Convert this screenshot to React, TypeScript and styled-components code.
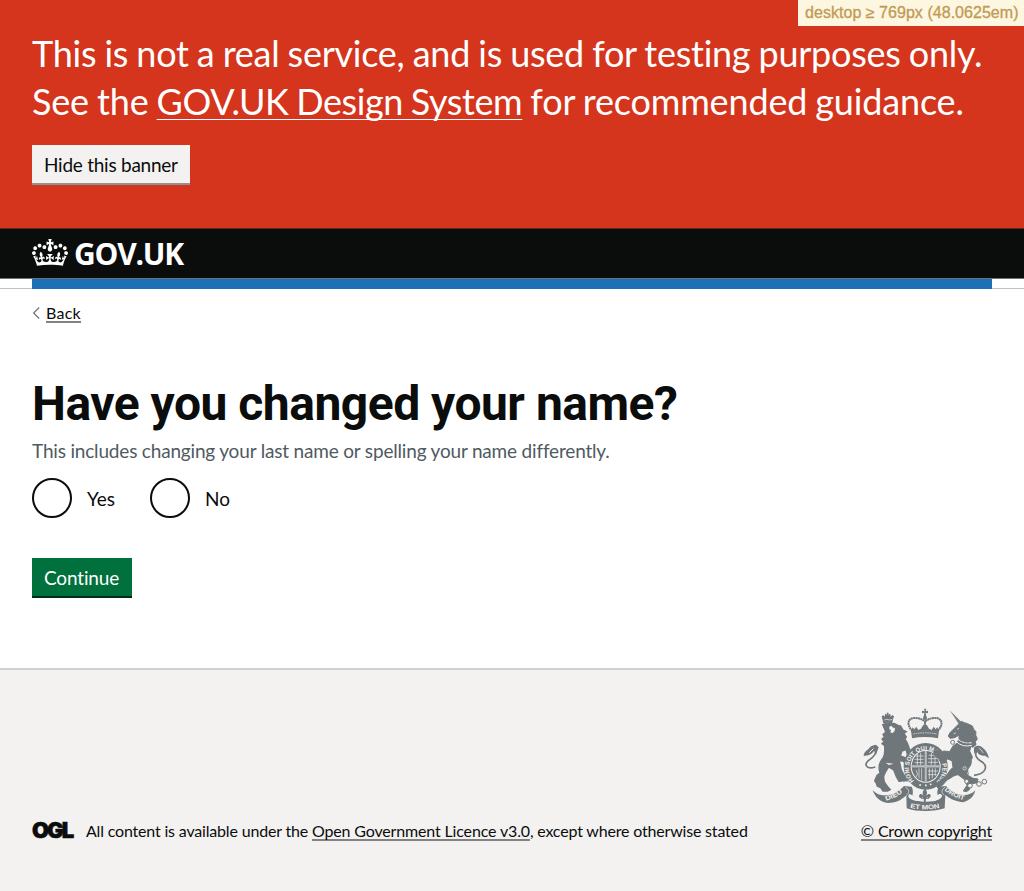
import React from "react";
import styled, { createGlobalStyle } from "styled-components";

const sans = '"Lato", "Liberation Sans", sans-serif';
const ink = "#0b0c0c";
const paper = "#f3f2f1";
const slate = "#6f777b";

const GlobalStyle = createGlobalStyle`
  * { box-sizing: border-box; }
  body { margin: 0; background: #fff; color: ${ink}; font-family: ${sans}; }
`;

const Page = styled.div`
  display: flex;
  flex-direction: column;
  min-height: 891px;
`;

const BreakpointTag = styled.div`
  position: absolute;
  top: 0;
  right: 0;
  height: 26px;
  width: 226px;
  padding-left: 7px;
  background: #fdf6e0;
  color: #c19a54;
  font: 16px/25px "Liberation Sans", Arial, sans-serif;
  letter-spacing: 0.04px;
  -webkit-text-stroke: 0.3px #c19a54;
  white-space: nowrap;
`;

const Banner = styled.section`
  height: 228px;
  padding: 29px 32px 0;
  background: #d4351c;
  color: #fff;
`;

const BannerText = styled.p`
  margin: 0 0 20px;
  font-size: 36px;
  line-height: 48px;
  white-space: nowrap;
`;

const BannerLine = styled.span<{ $track: number; $word: number }>`
  display: block;
  letter-spacing: ${(p) => p.$track}px;
  word-spacing: ${(p) => p.$word}px;
`;

const BannerLink = styled.a`
  color: inherit;
  letter-spacing: -0.4px;
  text-decoration: underline;
  text-decoration-thickness: 1px;
  text-underline-offset: 4px;
  text-decoration-skip-ink: none;
`;

const Button = styled.button<{ $tone: "light" | "green"; $width: number }>`
  display: block;
  width: ${(p) => p.$width}px;
  height: 38px;
  margin: 0;
  padding: 1px 0 0 12px;
  border: 0;
  text-align: left;
  white-space: nowrap;
  font: 19px/38px ${sans};
  letter-spacing: ${(p) => (p.$tone === "green" ? -0.15 : -0.25)}px;
  color: ${(p) => (p.$tone === "green" ? "#fff" : ink)};
  background: ${(p) => (p.$tone === "green" ? "#00703c" : paper)};
  box-shadow: 0 2px 0 ${(p) => (p.$tone === "green" ? "#002d18" : "#929191")};
`;

const Header = styled.header`
  height: 51px;
  padding: 10px 32px 0;
  border-top: 1px solid #5b2a22;
  border-bottom: 1px solid #6f7475;
  background: ${ink};
  color: #fff;
  display: flex;
  align-items: flex-start;
`;

const Wordmark = styled.span`
  margin-left: 6px;
  font: 700 30px/30px "Open Sans", sans-serif;
  letter-spacing: -1.2px;
`;

const BlueBar = styled.div`
  height: 10px;
  padding: 0 32px;
  border-bottom: 1px solid #bfc1c3;

  &::before {
    content: "";
    display: block;
    height: 10px;
    background: #1d70b8;
  }
`;

const Main = styled.main`
  flex: 1;
  padding: 14px 32px 0;
`;

const BackLink = styled.a`
  display: flex;
  align-items: center;
  width: max-content;
  height: 20px;
  gap: 6px;
  font-size: 16px;
  line-height: 20px;
  color: ${ink};
`;

const Underlined = styled.span<{ $track?: number }>`
  display: inline-block;
  height: 20px;
  line-height: 20px;
  border-bottom: 2px solid #818282;
  letter-spacing: ${(p) => p.$track ?? 0}px;
`;

const Title = styled.h1`
  margin: 56px 0 0;
  font: 700 48px/50px "Roboto", sans-serif;
  letter-spacing: -0.5px;
  white-space: nowrap;
`;

const Hint = styled.p`
  margin: 9px 0 15px;
  font-size: 19px;
  line-height: 25px;
  letter-spacing: -0.18px;
  color: #505a5f;
`;

const Choices = styled.div`
  display: flex;
  gap: 35px;
  height: 40px;
  margin-bottom: 40px;
`;

const Choice = styled.label`
  display: flex;
  align-items: flex-start;
  gap: 15px;
  font-size: 19px;
  line-height: 42px;
`;

const Dial = styled.span`
  width: 40px;
  height: 40px;
  border: 2px solid ${ink};
  border-radius: 50%;
`;

const Footer = styled.footer`
  height: 223px;
  padding: 36px 32px 0;
  border-top: 2px solid #cfd1d1;
  background: ${paper};
  display: flex;
  justify-content: space-between;
  align-items: flex-start;
`;

const Licence = styled.div`
  display: flex;
  align-items: center;
  height: 20px;
  margin-top: 115px;
  font-size: 16px;
  line-height: 20px;
  white-space: nowrap;
`;

const OglMark = styled.span`
  width: 54px;
  margin-top: -2px;
  font: 900 22px/20px "Inter", sans-serif;
  letter-spacing: -2px;
  -webkit-text-stroke: 0.6px ${ink};
`;

const LicenceText = styled.span`
  letter-spacing: -0.18px;
`;

const Copyright = styled.a`
  display: flex;
  flex-direction: column;
  align-items: flex-end;
  gap: 8px;
  font-size: 16px;
  color: ${ink};

  svg { margin-right: 2px; }
`;

const Crown = () => (
  <svg width="36" height="27" viewBox="0 0 132 97" preserveAspectRatio="none" fill="#fff" aria-hidden="true">
    <path fillRule="evenodd" d="M25 30.2c3.5 1.5 7.7-.2 9.1-3.7 1.5-3.6-.2-7.8-3.9-9.2-3.6-1.4-7.6.3-9.1 3.9-1.4 3.5.3 7.5 3.9 9zM9 39.5c3.6 1.5 7.8-.2 9.2-3.7 1.5-3.6-.2-7.8-3.9-9.1-3.6-1.5-7.6.2-9.1 3.8-1.4 3.5.3 7.5 3.8 9zM4.4 57.2c3.5 1.5 7.7-.2 9.1-3.8 1.5-3.6-.2-7.7-3.9-9.1-3.5-1.5-7.6.3-9.1 3.8-1.4 3.5.3 7.6 3.9 9.1zm38.3-21.4c3.5 1.5 7.7-.2 9.1-3.8 1.5-3.6-.2-7.7-3.9-9.1-3.6-1.5-7.6.3-9.1 3.8-1.3 3.6.4 7.7 3.9 9.1zm64.4-5.6c-3.6 1.5-7.8-.2-9.1-3.7-1.5-3.6.2-7.8 3.8-9.2 3.6-1.4 7.7.3 9.2 3.9 1.3 3.5-.4 7.5-3.9 9zm15.9 9.3c-3.6 1.5-7.7-.2-9.1-3.7-1.5-3.6.2-7.8 3.7-9.1 3.6-1.5 7.7.2 9.2 3.8 1.5 3.5-.3 7.5-3.8 9zm4.7 17.7c-3.6 1.5-7.8-.2-9.2-3.8-1.5-3.6.2-7.7 3.9-9.1 3.6-1.5 7.7.3 9.2 3.8 1.3 3.5-.4 7.6-3.9 9.1zM89.3 35.8c-3.6 1.5-7.8-.2-9.2-3.8-1.4-3.6.2-7.7 3.9-9.1 3.6-1.5 7.7.3 9.2 3.8 1.4 3.6-.3 7.7-3.9 9.1zM69.7 17.7l8.9 4.7V9.3l-8.9 2.8c-.2-.3-.5-.6-.9-.9L72.4 0H59.6l3.5 11.2c-.3.3-.6.5-.9.9l-8.8-2.8v13.1l8.8-4.7c.3.3.6.7.9.9l-5 15.4v.1c-.2.8-.4 1.6-.4 2.4 0 4.1 3.1 7.5 7 8.1h.2c.3 0 .7.1 1 .1.4 0 .7 0 1-.1h.2c4-.6 7.1-4.1 7.1-8.1 0-.8-.1-1.7-.4-2.4V34l-5.1-15.4c.4-.2.7-.6 1-.9zM66 92.8c16.9 0 32.8 1.1 47.1 3.2 4-16.9 8.9-26.7 14-33.5l-9.6-3.4c1 4.9 1.1 7.2 0 10.2-1.5-1.4-3-4.3-4.2-8.7L108.6 76c2.8-2 5-3.2 7.5-3.3-4.4 9.4-10 11.9-13.6 11.2-4.3-.8-6.3-4.6-5.6-7.9 1-4.7 5.7-5.9 8-.5 4.3-8.7-3-11.4-7.6-8.8 7.1-7.2 7.9-13.5 2.1-21.1-8 6.1-8.1 12.3-4.5 20.8-4.7-5.4-12.1-2.5-9.5 6.2 3.4-5.2 7.9-2 7.2 3.1-.6 4.3-6.4 7.8-13.5 7.2-10.3-.9-10.9-8-11.2-13.8 2.5-.5 7.1 1.8 11 7.3L80.2 60c-4.1 4.4-8 5.3-12.3 5.4 1.4-4.4 8-11.6 8-11.6H55.5s6.4 7.2 7.9 11.6c-4.2-.1-8-1-12.3-5.4l1.4 16.4c3.9-5.5 8.5-7.7 10.9-7.3-.3 5.8-.9 12.8-11.1 13.8-7.2.6-12.9-2.9-13.5-7.2-.7-5 3.8-8.3 7.1-3.1 2.7-8.7-4.6-11.6-9.4-6.2 3.7-8.5 3.6-14.7-4.6-20.8-5.8 7.6-5 13.9 2.2 21.1-4.7-2.6-11.9.1-7.7 8.8 2.3-5.5 7.1-4.2 8.1.5.7 3.3-1.3 7.1-5.7 7.9-3.5.7-9-1.8-13.5-11.2 2.5.1 4.7 1.3 7.5 3.3l-4.7-15.4c-1.2 4.4-2.7 7.2-4.3 8.7-1.1-3-.9-5.3 0-10.2l-9.5 3.4c5 6.9 9.9 16.7 14 33.5 14.8-2.1 30.8-3.2 47.7-3.2z" />
  </svg>
);

const Chevron = () => (
  <svg width="8" height="12" viewBox="0 0 8 12" fill="none" stroke="#6b6d6e" strokeWidth="1.1" aria-hidden="true">
    <path d="M7.2 0.5L1.6 6l5.6 5.5" />
  </svg>
);

const RoyalArms = () => (
  <svg width="130" height="107" viewBox="30 20 390 321" fill={slate} stroke="none" aria-hidden="true">
    <defs>
      <path id="garter" d="M192 245A50 54 0 1 1 262 245" />
      <path id="dieu" d="M108 304Q140 296 166 272" />
      <path id="monde" d="M180 325Q226 337 274 324" />
      <path id="droit" d="M283 273Q308 295 348 304" />
    </defs>

    {/* crown */}
    <path d="M222 28h7l-2 8 7-2v8l-7-2 2 12h-8l2-12-7 2v-8l8 2z" />
    <circle cx="225" cy="56" r="6" />
    <g fill="none" stroke={slate}>
      <path d="M187 95C166 72 176 54 198 56c14 1 24 7 27 12 3-5 13-11 27-12 22-2 32 16 11 39" strokeWidth="6" strokeDasharray="6 1" />
      <path d="M225 64v28" strokeWidth="6" strokeDasharray="5 1.5" />
    </g>
    <path d="M183 94l5-10 5 6 6-8 6 10 8-4 6-10 6-4 6 4 6 10 8 4 6-10 6 8 5-6 5 10-3 23q-40-8-78 0z" />
    <path d="M190 104q35-7 71 0" fill="none" stroke={paper} strokeWidth="2" strokeDasharray="5 2" />

    {/* lion */}
    <path d="M95 51l5-3 4 4 1-9 6 3-1-6h6l-1 6 6-3 1 9 5-5 5 4-6 21q-12-3-26 0z" />
    <path d="M103 62l8-2 8 2 8-2" fill="none" stroke={paper} strokeWidth="2" />
    <path stroke={slate} strokeWidth="4" d="M98 76C112 70 132 70 144 78l8 2 7 12 10 5-7 5 7 11-4 6 7 12c4 10 8 18 8 28l-8 6-4-14-12 4-5 15 12 4 12 7-2 12-8-3-8-5-9-1 6 28 10 18 14 4-1 10-30 2-8-14-8-20-15-9c-9 14-15 22-15 31l2 14 10 14 8 9-8 4h-14l-7-10-10-4-3-9-5-8 7-16 9-7c-5-14-2-32 8-44 8-10 6-26 6-38l-8-6 6-6-6-8 7-6-4-8 8-6-2-7z" />
    <path d="M118 82l7-3 2 5 8 3-1 8-7 7-6-3 2-7-5-2zM107 190l10 7 14-4" fill={paper} />
    <path d="M76 203C46 212 40 193 60 180c16-11 22-25 14-40" fill="none" stroke={slate} strokeWidth="5" />
    <path d="M41 170c1-14 9-15 15-22 5-8 12-11 22-12l8 8-8 22-6-12c-6 12-18 14-31 16z" />
    <path d="M58 160l12-12" stroke={paper} strokeWidth="3" />
    <path d="M64 263l5 9 6-8M84 276l-1 10M154 252l4-7M166 251l1-5" stroke={paper} strokeWidth="1.5" fill="none" />

    {/* garter and shield */}
    <ellipse cx="227" cy="201" rx="66" ry="70" />
    <ellipse cx="227" cy="201" rx="45" ry="49" fill={paper} />
    <text fill={paper} fontFamily="Liberation Sans" fontWeight="700" fontSize="19">
      <textPath href="#garter" textLength="252" lengthAdjust="spacingAndGlyphs">HONI SOIT QUI MAL Y PENSE</textPath>
    </text>
    <ellipse cx="227" cy="201" rx="42" ry="46" />
    <g fill="none" stroke={paper}>
      <path d="M227 156v90M186 201h82" strokeWidth="5" />
      <path d="M196 170h25M194 180h27M194 190h27M202 163v34M212 160v37M236 168h20M234 178h28M234 189h30M244 161v36M255 168v30" strokeWidth="2" />
      <path d="M198 212q9 13 0 22M207 207v30M215 207v36M238 207v32M247 207v30M256 207v22M234 215h30M234 226h26" strokeWidth="2" />
      <path d="M227 156v90M186 201h82" stroke={slate} strokeWidth="1.5" />
    </g>
    <path d="M208 256l5 2m12 0l5 0m10-2l4-2" fill="none" stroke={paper} strokeWidth="5" />

    {/* unicorn */}
    <path d="M299 33l27 40 8-5z" />
    <path d="M303 40l26 29" stroke={paper} strokeWidth="1.5" strokeDasharray="2 5" />
    <path stroke={slate} strokeWidth="3" d="M324 76l10-10 9 4 10 3 14 7 4 10 7 7-1 10 5 12-6 8 2 9-10 8-5-4-4 15 8 18-5 24-9 14 3 18 13 8 15 2-3 11-17 4-6 17-9 6-9-2 11-17-7-17-20-15c-13 1-20 10-33 16l-13 15-13 11-6-9 9-14 19-13 13-19 9-9-3-20-14-5-14 8-9-2-3-8-13-9-2-10 10-6 12 9 8-6 18 2 10-17 12-8c7-12 7-19 5-24l-12 7-14 2-5-7 5-10z" />
    <path d="M321 90l6-3M311 103l7-2" fill="none" stroke={paper} strokeWidth="2" />
    <path d="M319 127q19 18 46 11M323 119q17 16 42 11" fill="none" stroke={paper} strokeWidth="3" />
    <path d="M324 124l4 5m6-2l3 6m8-4l1 7m8-7v7" stroke={slate} strokeWidth="3" />
    <g fill="none" stroke={slate} strokeWidth="3">
      <circle cx="308" cy="129" r="6" /><circle cx="350" cy="246" r="6" fill={paper} /><circle cx="360" cy="259" r="7" fill={paper} />
      <circle cx="387" cy="254" r="7" /><circle cx="403" cy="247" r="7" />
    </g>
    <g fill="none" stroke={paper} strokeWidth="2">
      <circle cx="371" cy="183" r="5" /><circle cx="344" cy="207" r="5" /><circle cx="358" cy="222" r="5" />
    </g>
    <path d="M372 228c36-4 45-28 20-43-18-11-19-24-7-40" fill="none" stroke={slate} strokeWidth="5" />
    <path d="M372 145c8-9 20-7 26 0 8 7 15 14 19 32l-12-8c-12 0-20-2-25-14l-8 8z" />
    <path d="M386 146q8 5 14 15" fill="none" stroke={paper} strokeWidth="2" />

    {/* motto ribbon */}
    <path d="M68 272c12 14 26 16 38 16 24-1 40-12 56-28l23 2c4 8 5 17 2 27-5-6-12-5-12 1 0 8 12 12 24 15l50 1c17-4 27-9 27-17-1-6-9-7-13-1-3-10-1-19 4-26l21-2c18 17 32 26 54 27 14 0 24-4 34-14-3 17-18 32-37 36l-10-2c-15-2-30-9-43-20l-2 40c-24 9-80 13-114 0l-1-39c-18 17-34 23-55 23-22-2-39-17-46-39z" />
    <path d="M166 263c13 8 13 18 3 25M286 263c-13 8-13 18-3 25" fill="none" stroke={paper} strokeWidth="2" />
    <g fill={paper} fontFamily="Liberation Sans" fontWeight="700" fontSize="20">
      <text><textPath href="#dieu" textLength="56" lengthAdjust="spacingAndGlyphs">DIEU</textPath></text>
      <text><textPath href="#monde" textLength="90" lengthAdjust="spacingAndGlyphs">ET MON</textPath></text>
      <text><textPath href="#droit" textLength="66" lengthAdjust="spacingAndGlyphs">DROIT</textPath></text>
    </g>
    <path d="M190 268q36 15 72 0l-2 34q-34 10-68 0z" fill={paper} />
    <path d="M225 268c8 9 7 15 3 22 8-10 15-7 14 1-1 7-9 6-9 2l-5 5-1 10h-5l-1-10-5-5c0 5-8 5-9-2 0-8 7-11 14-1-4-7-5-13 4-22z" />
    <path d="M213 297h24" stroke={slate} strokeWidth="3" />
  </svg>
);

export default function App() {
  return (
    <Page>
      <GlobalStyle />
      <BreakpointTag>desktop ≥ 769px (48.0625em)</BreakpointTag>
      <Banner>
        <BannerText>
          <BannerLine $track={-0.25} $word={-0.8}>This is not a real service, and is used for testing purposes only.</BannerLine>
          <BannerLine $track={-0.16} $word={-1}>
            See the <BannerLink>GOV.UK Design System</BannerLink> for recommended guidance.
          </BannerLine>
        </BannerText>
        <Button $tone="light" $width={158}>Hide this banner</Button>
      </Banner>
      <Header>
        <Crown />
        <Wordmark>GOV.UK</Wordmark>
      </Header>
      <BlueBar />
      <Main>
        <BackLink>
          <Chevron />
          <Underlined $track={0.25}>Back</Underlined>
        </BackLink>
        <Title>Have you changed your name?</Title>
        <Hint>This includes changing your last name or spelling your name differently.</Hint>
        <Choices>
          <Choice><Dial />Yes</Choice>
          <Choice><Dial />No</Choice>
        </Choices>
        <Button $tone="green" $width={100}>Continue</Button>
      </Main>
      <Footer>
        <Licence>
          <OglMark>OGL</OglMark>
          <LicenceText>
            All content is available under the <Underlined $track={-0.15}>Open Government Licence v3.0</Underlined>, except where otherwise stated
          </LicenceText>
        </Licence>
        <Copyright>
          <RoyalArms />
          <Underlined $track={-0.18}>© Crown copyright</Underlined>
        </Copyright>
      </Footer>
    </Page>
  );
}
